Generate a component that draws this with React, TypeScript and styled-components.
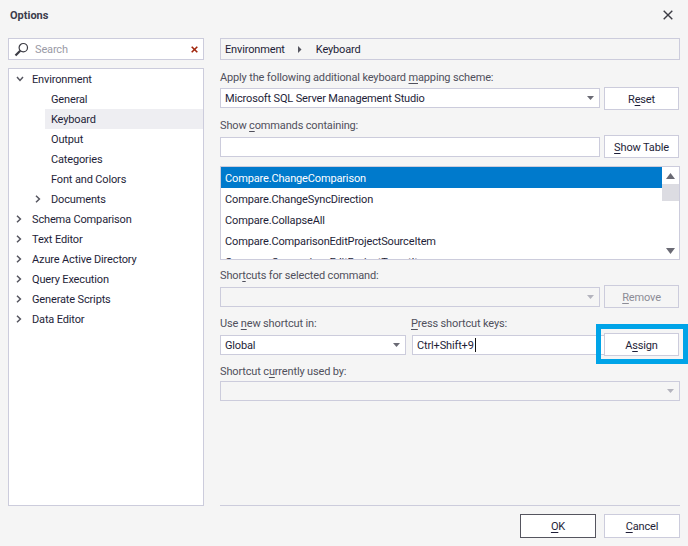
import React, { FC, ReactElement } from 'react';
import styled, { createGlobalStyle } from 'styled-components';

const Global = createGlobalStyle`
    html, body {
        margin: 0;
        padding: 0;
        background: #f5f5f5;
    }
    * {
        box-sizing: border-box;
    }
    u {
        text-underline-offset: 2px;
        text-decoration-thickness: 1px;
    }
`;

const border = '#ccccdc';
const ink = '#1e1e38';

const Dialog = styled.div`
    width: 688px;
    height: 546px;
    display: flex;
    flex-direction: column;
    background: #f5f5f5;
    color: ${ink};
    font-family: Roboto, 'Noto Sans', sans-serif;
    font-size: 11px;
    letter-spacing: -0.15px;
    overflow: hidden;
`;

const TitleBar = styled.div`
    height: 38px;
    flex: none;
    display: flex;
    align-items: flex-start;
    justify-content: space-between;
    padding: 8px 15px 0 10px;
`;

const Title = styled.div`
    font-weight: 700;
    font-size: 11px;
    line-height: 15px;
    letter-spacing: 0;
    color: #3c3c4c;
`;

const CloseButton = styled.span`
    display: flex;
    margin-top: 2px;
`;

const Body = styled.div`
    display: flex;
    gap: 16px;
    padding: 0 8px;
    height: 468px;
    flex: none;
`;

const Left = styled.div`
    width: 196px;
    display: flex;
    flex-direction: column;
    gap: 8px;
`;

const SearchBox = styled.div`
    height: 22px;
    flex: none;
    display: flex;
    align-items: center;
    background: #fff;
    border: 1px solid ${border};
    padding: 0 5px;
`;

const SearchText = styled.span`
    color: #9a9aa6;
    margin-left: 6px;
    flex: 1;
`;

const Tree = styled.div`
    flex: 1;
    background: #fff;
    border: 1px solid ${border};
`;

const TreeRow = styled.div<{ $level: number; $selected?: boolean }>`
    height: 20px;
    display: flex;
    align-items: center;
    padding-left: ${({ $level, $selected }) => ($selected ? 4 : $level === 0 ? 5 : 24)}px;
    margin-left: ${({ $selected }) => ($selected ? 36 : 0)}px;
    background: ${({ $selected }) => ($selected ? '#eeeef2' : 'transparent')};
`;

const Expander = styled.span<{ $selected?: boolean }>`
    width: ${({ $selected }) => ($selected ? 0 : 18)}px;
    flex: none;
    display: flex;
    align-items: center;
    padding-left: 2px;
`;

const Right = styled.div`
    flex: 1;
    display: flex;
    flex-direction: column;
`;

const Breadcrumb = styled.div`
    height: 22px;
    flex: none;
    display: flex;
    align-items: center;
    gap: 12px;
    border: 1px solid ${border};
    padding: 0 4px;
    margin-bottom: 8px;
`;

const CrumbArrow = styled.svg`
    margin-right: 2px;
`;

const Label = styled.div<{ $top?: number }>`
    line-height: 15px;
    height: 15px;
    margin-top: ${({ $top }) => $top ?? 0}px;
    color: #50505c;
`;

const Row = styled.div<{ $top?: number }>`
    display: flex;
    align-items: flex-start;
    justify-content: space-between;
    height: 23px;
    margin-top: ${({ $top }) => $top ?? 2}px;
`;

const Field = styled.div<{ $width?: number; $disabled?: boolean; $top?: number }>`
    width: ${({ $width }) => ($width ? `${$width}px` : '100%')};
    height: 20px;
    margin-top: ${({ $top }) => $top ?? 2}px;
    display: flex;
    align-items: center;
    justify-content: space-between;
    flex: none;
    padding: 0 5px 0 4px;
    border: 1px solid ${border};
    background: ${({ $disabled }) => ($disabled ? '#f5f5f5' : '#fff')};
`;

const Button = styled.div<{ $default?: boolean; $disabled?: boolean }>`
    width: 75px;
    height: 23px;
    flex: none;
    display: flex;
    align-items: center;
    justify-content: center;
    padding-top: 1px;
    margin-right: 1px;
    background: ${({ $disabled }) => ($disabled ? '#f5f5f5' : '#fff')};
    color: ${({ $disabled }) => ($disabled ? '#8c8c96' : ink)};
    border: 1px solid ${({ $default }) => ($default ? '#55555f' : border)};
    position: relative;
`;

const Highlight = styled.div`
    position: absolute;
    left: -9px;
    right: -10px;
    top: -10px;
    bottom: -9px;
    border: 5px solid #00a4e8;
    pointer-events: none;
`;

const List = styled.div`
    height: 94px;
    flex: none;
    margin-top: 8px;
    display: flex;
    border: 1px solid ${border};
    background: #fff;
    overflow: hidden;
`;

const Items = styled.div`
    flex: 1;
    overflow: hidden;
`;

const Item = styled.div<{ $selected?: boolean }>`
    height: 21px;
    line-height: 19px;
    padding: 2px 0 0 4px;
    background: ${({ $selected }) => ($selected ? '#007acc' : 'transparent')};
    color: ${({ $selected }) => ($selected ? '#fff' : ink)};
`;

const ScrollBar = styled.div`
    width: 17px;
    flex: none;
    display: flex;
    flex-direction: column;
    align-items: center;
    justify-content: space-between;
    padding: 6px 0 5px;
    position: relative;
`;

const Thumb = styled.div`
    position: absolute;
    left: 0;
    right: 0;
    top: 17px;
    height: 17px;
    background: #dcdce2;
`;

const KeyBox = styled.div`
    width: 192px;
    margin: 2px 0 0 6px;
    height: 20px;
    flex: none;
    display: flex;
    align-items: center;
    border: 1px solid ${border};
    border-right: none;
    padding: 0 4px;
    background: #fff;
`;

const CaretBar = styled.span`
    width: 1px;
    height: 14px;
    margin-left: 1px;
    background: #111;
`;

const Footer = styled.div`
    flex: none;
    margin: -1px 8px 0 220px;
    border-top: 1px solid ${border};
    padding-top: 8px;
    display: flex;
    justify-content: flex-end;
    gap: 8px;
`;

const FooterButton = styled(Button)`
    width: 76px;
    height: 24px;
    margin-right: 0;
    padding-top: 0;
`;

const Split = styled.div`
    display: flex;
    align-items: flex-start;
`;

const LabelSplit = styled(Label)`
    display: flex;
`;

const LabelCell = styled.span`
    width: 191px;
`;

const ChevronDown: FC = (): ReactElement => (
    <svg width="8" height="6" viewBox="0 0 8 6">
        <path d="M1 1 L4 4.4 L7 1" fill="none" stroke="#55555f" strokeWidth="1.5" />
    </svg>
);

const ChevronRight: FC = (): ReactElement => (
    <svg width="6" height="8" viewBox="0 0 6 8">
        <path d="M1 0.8 L4.4 4 L1 7.2" fill="none" stroke="#55555f" strokeWidth="1.5" />
    </svg>
);

const ComboArrow: FC<{ color?: string }> = ({ color = '#6a6a74' }): ReactElement => (
    <svg width="7" height="4" viewBox="0 0 7 4">
        <path d="M0 0 H7 L3.5 4 Z" fill={color} />
    </svg>
);

const ScrollArrow: FC<{ up?: boolean }> = ({ up }): ReactElement => (
    <svg width="9" height="6" viewBox="0 0 9 6">
        <path d={up ? 'M0 6 H9 L4.5 0 Z' : 'M0 0 H9 L4.5 6 Z'} fill="#6a6a74" />
    </svg>
);

const SearchIcon: FC = (): ReactElement => (
    <svg width="15" height="15" viewBox="0 0 15 15">
        <circle cx="9.3" cy="5.7" r="4.2" fill="none" stroke="#3c3c44" strokeWidth="1.2" />
        <path d="M6.2 8.8 L1.5 13.5" stroke="#3c3c44" strokeWidth="2.2" />
    </svg>
);

const ClearIcon: FC = (): ReactElement => (
    <svg width="7" height="7" viewBox="0 0 7 7">
        <path d="M0.7 0.7 L6.3 6.3 M6.3 0.7 L0.7 6.3" stroke="#a1260d" strokeWidth="1.6" />
    </svg>
);

const CloseIcon: FC = (): ReactElement => (
    <svg width="10" height="10" viewBox="0 0 10 10">
        <path d="M0.7 0.7 L9.3 9.3 M9.3 0.7 L0.7 9.3" stroke="#3c3c44" strokeWidth="1.4" />
    </svg>
);

const tree = [
    { label: 'Environment', level: 0, icon: 'down' },
    { label: 'General', level: 1 },
    { label: 'Keyboard', level: 1, selected: true },
    { label: 'Output', level: 1 },
    { label: 'Categories', level: 1 },
    { label: 'Font and Colors', level: 1 },
    { label: 'Documents', level: 1, icon: 'right' },
    { label: 'Schema Comparison', level: 0, icon: 'right' },
    { label: 'Text Editor', level: 0, icon: 'right' },
    { label: 'Azure Active Directory', level: 0, icon: 'right' },
    { label: 'Query Execution', level: 0, icon: 'right' },
    { label: 'Generate Scripts', level: 0, icon: 'right' },
    { label: 'Data Editor', level: 0, icon: 'right' },
];

const commands = [
    'Compare.ChangeComparison',
    'Compare.ChangeSyncDirection',
    'Compare.CollapseAll',
    'Compare.ComparisonEditProjectSourceItem',
    'Compare.ComparisonEditProjectTargetItem',
];

export default function App(): ReactElement {
    return (
        <Dialog>
            <Global />
            <TitleBar>
                <Title>Options</Title>
                <CloseButton>
                    <CloseIcon />
                </CloseButton>
            </TitleBar>
            <Body>
                <Left>
                    <SearchBox>
                        <SearchIcon />
                        <SearchText>Search</SearchText>
                        <ClearIcon />
                    </SearchBox>
                    <Tree>
                        {tree.map(({ label, level, icon, selected }) => (
                            <TreeRow key={label} $level={level} $selected={selected}>
                                <Expander $selected={selected}>
                                    {icon === 'down' && <ChevronDown />}
                                    {icon === 'right' && <ChevronRight />}
                                </Expander>
                                <span>{label}</span>
                            </TreeRow>
                        ))}
                    </Tree>
                </Left>
                <Right>
                    <Breadcrumb>
                        <span>Environment</span>
                        <CrumbArrow width="5" height="7" viewBox="0 0 5 7">
                            <path d="M1 0 L4.5 3.5 L1 7 Z" fill="#55555f" />
                        </CrumbArrow>
                        <span>Keyboard</span>
                    </Breadcrumb>
                    <Label $top={2}>
                        Apply the following additional keyboard <u>m</u>apping scheme:
                    </Label>
                    <Row>
                        <Field $width={380} $top={1}>
                            Microsoft SQL Server Management Studio
                            <ComboArrow />
                        </Field>
                        <Button>
                            <span>
                                R<u>e</u>set
                            </span>
                        </Button>
                    </Row>
                    <Label $top={8}>
                        Show <u>c</u>ommands containing:
                    </Label>
                    <Row>
                        <Field $width={380} />
                        <Button>
                            <span>
                                <u>S</u>how Table
                            </span>
                        </Button>
                    </Row>
                    <List>
                        <Items>
                            {commands.map((command, i) => (
                                <Item key={command} $selected={i === 0}>
                                    {command}
                                </Item>
                            ))}
                        </Items>
                        <ScrollBar>
                            <ScrollArrow up />
                            <Thumb />
                            <ScrollArrow />
                        </ScrollBar>
                    </List>
                    <Label $top={8}>
                        Shor<u>t</u>cuts for selected command:
                    </Label>
                    <Row>
                        <Field $width={380} $disabled>
                            <span />
                            <ComboArrow color="#b4b4be" />
                        </Field>
                        <Button $disabled>
                            <span>
                                <u>R</u>emove
                            </span>
                        </Button>
                    </Row>
                    <LabelSplit $top={8}>
                        <LabelCell>
                            Use <u>n</u>ew shortcut in:
                        </LabelCell>
                        <span>
                            <u>P</u>ress shortcut keys:
                        </span>
                    </LabelSplit>
                    <Row>
                        <Split>
                            <Field $width={186}>
                                Global
                                <ComboArrow />
                            </Field>
                            <KeyBox>
                                Ctrl+Shift+9
                                <CaretBar />
                            </KeyBox>
                        </Split>
                        <Button>
                            <span>
                                A<u>s</u>sign
                            </span>
                            <Highlight />
                        </Button>
                    </Row>
                    <Label $top={8}>
                        Shortcut c<u>u</u>rrently used by:
                    </Label>
                    <Row>
                        <Field $disabled $top={0}>
                            <span />
                            <ComboArrow color="#b4b4be" />
                        </Field>
                    </Row>
                </Right>
            </Body>
            <Footer>
                <FooterButton $default>
                    <span>
                        <u>O</u>K
                    </span>
                </FooterButton>
                <FooterButton>
                    <span>
                        <u>C</u>ancel
                    </span>
                </FooterButton>
            </Footer>
        </Dialog>
    );
}
